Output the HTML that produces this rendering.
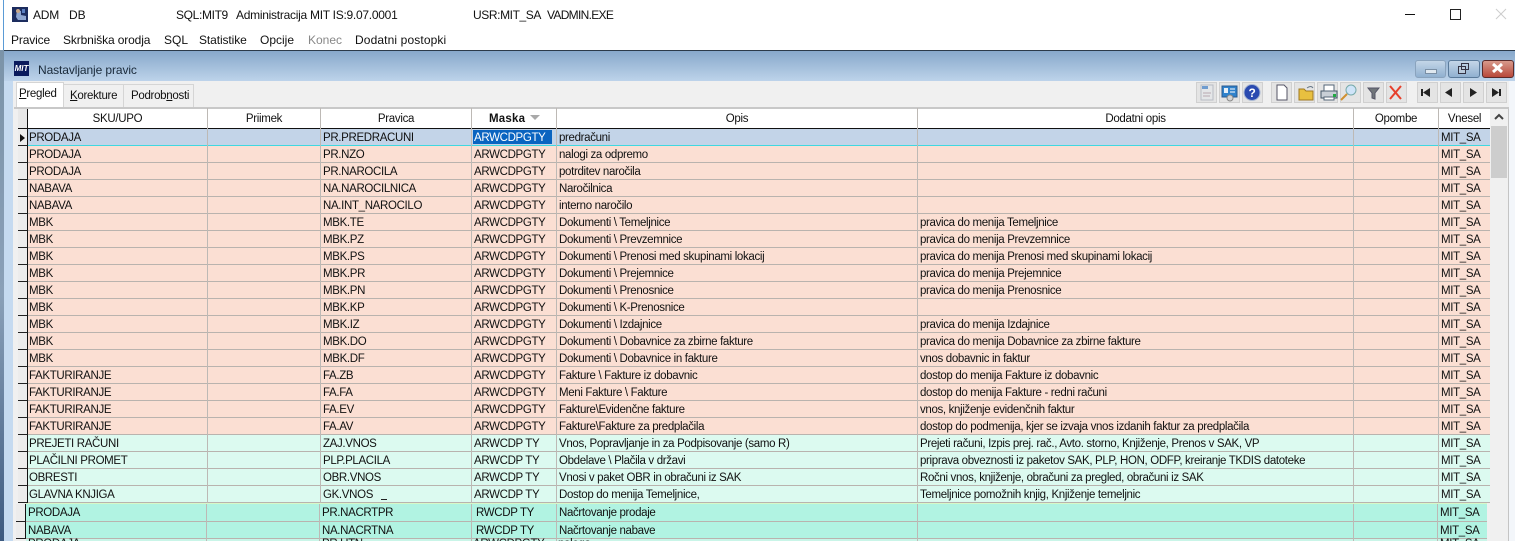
<!DOCTYPE html>
<html><head><meta charset="utf-8"><style>
html,body{margin:0;padding:0;background:#fff}
#p{position:relative;width:1515px;height:541px;overflow:hidden;background:#fff;font-family:"Liberation Sans",sans-serif;font-size:12px;color:#111}
#p div,#p span,#p svg{position:absolute;display:block}
.t{white-space:nowrap;line-height:14px}
.r{left:27px;width:1463px;height:17px;font-size:11.5px;letter-spacing:-.34px}
.r span{white-space:nowrap;top:1px;line-height:16px;height:16px}
.o{background:#fbdfd3}.g{background:#dcfaf0}.k{background:#b1f3e2}
.r:after{content:"";position:absolute;left:0;right:0;bottom:0;height:1px;background:#b9b3ae}
.a{left:2px}.b{left:296px}.c{left:447px}.d{left:532px}.e{left:893px}.f{left:1414px}
.v{top:108px;width:1px;height:395px;background:#bdb9b5}
.h{top:111px;font-size:11.5px;letter-spacing:-.3px;line-height:16px;text-align:center;white-space:nowrap}
.s{left:18px;width:9px;height:16px;background:#ececec;border-right:1px solid #111;border-bottom:1px solid #222}
.b1{top:82px;width:19px;height:19px;background:#e4e4e4;border:1px solid #d0d0d0}
</style></head><body><div id="p">
<div style="left:0;top:0;width:3px;height:50px;background:#fff"></div>
<div style="left:3px;top:0;width:1px;height:50px;background:#5a9bd6"></div>
<svg style="left:12px;top:7px" width="16" height="15"><rect width="16" height="15" fill="#1c2c5e"/><path d="M5 3l4 1v4l5 1v4H6l-2-3z" fill="#8fa6d0"/><circle cx="6" cy="4" r="2" fill="#c9a88a"/><rect x="10" y="2" width="3" height="4" fill="#5b7fc0"/></svg>
<div class="t" style="left:33px;top:8px;letter-spacing:-.2px">ADM</div><div class="t" style="left:69px;top:8px">DB</div>
<div class="t" style="left:176px;top:8px;letter-spacing:-.35px">SQL:MIT9</div><div class="t" style="left:236px;top:8px;letter-spacing:-.27px">Administracija MIT IS:9.07.0001</div>
<div class="t" style="left:473px;top:8px;letter-spacing:-.4px">USR:MIT_SA</div><div class="t" style="left:547px;top:8px;letter-spacing:-.7px">VADMIN.EXE</div>
<div style="left:1405px;top:14px;width:10px;height:1px;background:#111"></div>
<div style="left:1450px;top:9px;width:9px;height:9px;border:1px solid #222"></div>
<svg style="left:1495px;top:8px" width="12" height="12"><path d="M1 1L11 11M11 1L1 11" stroke="#ccc"/></svg>
<div class="t" style="left:11px;top:33px;letter-spacing:-.15px">Pravice</div><div class="t" style="left:63px;top:33px;letter-spacing:-.13px">Skrbniška orodja</div><div class="t" style="left:164px;top:33px">SQL</div><div class="t" style="left:199px;top:33px;letter-spacing:-.1px">Statistike</div><div class="t" style="left:260px;top:33px">Opcije</div><div class="t" style="left:308px;top:33px;color:#888">Konec</div><div class="t" style="left:355px;top:33px;letter-spacing:.12px">Dodatni postopki</div>

<div style="left:0;top:50px;width:4px;height:491px;background:linear-gradient(#7b93a8,#8aa0b8 50%,#3d5a80)"></div>
<div style="left:4px;top:50px;width:1511px;height:1px;background:#2b3a4a"></div>
<div style="left:4px;top:51px;width:1511px;height:30px;background:linear-gradient(#87a8cb,#bdd3ea)"></div>
<div style="left:4px;top:81px;width:9px;height:460px;background:#c5daf0"></div>
<div style="left:13px;top:81px;width:1496px;height:460px;background:#f0f0f0"></div>
<div style="left:1509px;top:81px;width:6px;height:460px;background:#f3f6fa"></div>
<div style="left:1508px;top:108px;width:1px;height:433px;background:#c4c4c4"></div>
<div style="left:14px;top:61px;width:15px;height:15px;background:#0a1a5c;color:#fff;font:bold italic 8px/15px 'Liberation Sans',sans-serif;text-align:center">MIT</div>
<div class="t" style="left:38px;top:63px;color:#1a2a3a;letter-spacing:-.1px">Nastavljanje pravic</div>
<div style="left:1415px;top:60px;width:29px;height:16px;background:linear-gradient(#c4d6e8,#90b0d0);border:1px solid #8aa3bd;border-radius:3px"></div>
<div style="left:1425px;top:69px;width:10px;height:3px;background:#dfe8f0;border:1px solid #7a8fa5"></div>
<div style="left:1448px;top:60px;width:30px;height:16px;background:linear-gradient(#c4d6e8,#90b0d0);border:1px solid #5a7a9a;border-radius:3px"></div>
<div style="left:1458px;top:66px;width:6px;height:6px;border:1px solid #334;background:#bcd"></div><div style="left:1461px;top:63px;width:6px;height:5px;border:1px solid #334"></div>
<div style="left:1482px;top:60px;width:30px;height:16px;background:linear-gradient(#d89a8c,#b8483a);border:1px solid #5a2a2a;border-radius:3px"></div>
<svg style="left:1491px;top:63px" width="13" height="10"><path d="M2 1L11 9M11 1L2 9" stroke="#fff" stroke-width="3"/></svg>

<div style="left:16px;top:82px;width:46px;height:25px;background:#fff;border:1px solid #d5d5d5;border-bottom:0"></div>
<div style="left:63px;top:84px;width:59px;height:23px;background:#f0f0f0;border:1px solid #d5d5d5;border-bottom:0"></div>
<div style="left:123px;top:84px;width:69px;height:23px;background:#f0f0f0;border:1px solid #d5d5d5;border-bottom:0"></div>
<div class="t" style="left:19px;top:87px;font-size:11.5px;letter-spacing:-.3px"><u>P</u>regled</div><div class="t" style="left:70px;top:89px;font-size:11.5px;letter-spacing:-.3px"><u>K</u>orekture</div><div class="t" style="left:131px;top:89px;font-size:11.5px;letter-spacing:-.3px">Podrob<u>n</u>osti</div>

<div class="b1" style="left:1196px"></div><div class="b1" style="left:1219px"></div><div class="b1" style="left:1242px"></div><div class="b1" style="left:1271px"></div><div class="b1" style="left:1294px"></div><div class="b1" style="left:1317px"></div><div class="b1" style="left:1340px"></div><div class="b1" style="left:1363px"></div><div class="b1" style="left:1386px"></div><div class="b1" style="left:1417px"></div><div class="b1" style="left:1440px"></div><div class="b1" style="left:1463px"></div><div class="b1" style="left:1486px"></div>
<svg style="left:1196px;top:82px" width="312" height="22">
<rect x="5" y="3" width="12" height="15" fill="#e4e6e8" stroke="#b8bcc4"/><rect x="6" y="4" width="6" height="3" fill="#6f9ccf"/><path d="M7 11h8M7 14h7" stroke="#b8a8b0"/>
<rect x="26" y="4" width="15" height="11" fill="#2f82cc" stroke="#2a5a90"/><rect x="28" y="6" width="4" height="5" fill="#e8f0f8"/><path d="M34 7h5M34 10h5" stroke="#fff"/><circle cx="34" cy="16" r="3" fill="#d4d4d4" stroke="#888"/>
<circle cx="56" cy="10.500" r="8" fill="#2a4ab0" stroke="#a9b8d4"/><text x="52.500" y="15" font-size="12" font-weight="bold" fill="#fff" font-family="Liberation Sans">?</text>
<path d="M81 3h7l3 3v12H81z" fill="#fff" stroke="#556"/>
<path d="M103 7h5l2 2h7v9h-14z" fill="#e8c040" stroke="#a07820"/><path d="M111 6q4-3 6 0" fill="none" stroke="#678"/>
<path d="M125 9h16v7h-16z" fill="#c9cfd6" stroke="#456"/><rect x="128" y="3" width="10" height="6" fill="#fff" stroke="#567"/><rect x="128" y="15" width="10" height="3" fill="#fff" stroke="#567"/><rect x="137" y="12" width="3" height="3" fill="#2a4"/>
<circle cx="155" cy="8" r="5" fill="#cfe4f8" stroke="#7aa"/><path d="M151 12l-6 6" stroke="#d09030" stroke-width="2"/>
<path d="M172 6h11l-4 5v6l-3-1v-5z" fill="#70757a" stroke="#556"/>
<path d="M194 4L205 17M205 4L194 17" stroke="#e6402c" stroke-width="2"/>
<path d="M226 7v7" stroke="#222" stroke-width="2"/><path d="M234 6v9l-7-4.500z" fill="#222"/>
<path d="M256 6v9l-7-4.500z" fill="#222"/><path d="M274 6v9l7-4.500z" fill="#222"/>
<path d="M296 6v9l7-4.500z" fill="#222"/><path d="M304 7v7" stroke="#222" stroke-width="2"/>
</svg>

<div style="left:14px;top:107px;width:1495px;height:2px;background:#c8c8c8"></div>
<div style="left:18px;top:109px;width:1472px;height:19px;background:#fff;border-bottom:1px solid #111"></div>
<div style="left:18px;top:109px;width:9px;height:19px;background:#e8e8e8;border-right:1px solid #111"></div>
<div style="left:14px;top:109px;width:4px;height:432px;background:#f0f0f0"></div>
<div style="left:1491px;top:126px;width:16px;height:52px;background:#cdcdcd"></div>
<svg style="left:1494px;top:113px" width="10" height="8"><path d="M1 6L5 2L9 6" fill="none" stroke="#444" stroke-width="2"/></svg>

<div class="r o" style="top:129px;background:#c3d4e8"><span class="a">PRODAJA</span><span class="b">PR.PREDRACUNI</span><span class="d">predračuni</span><span class="f">MIT_SA</span></div>
<div style="left:27px;top:145px;width:1463px;height:1px;background:#3fd8e0"></div>
<div style="left:473px;top:130px;width:79px;height:14px;background:#0a64c0;color:#fff;font-size:11.5px;letter-spacing:-.34px;line-height:15px;padding-left:1px;padding-top:1px;box-sizing:border-box">ARWCDPGTY</div>

<div class="r o" style="top:146px"><span class="a">PRODAJA</span><span class="b">PR.NZO</span><span class="c">ARWCDPGTY</span><span class="d">nalogi za odpremo</span><span class="f">MIT_SA</span></div>
<div class="r o" style="top:163px"><span class="a">PRODAJA</span><span class="b">PR.NAROCILA</span><span class="c">ARWCDPGTY</span><span class="d">potrditev naročila</span><span class="f">MIT_SA</span></div>
<div class="r o" style="top:180px"><span class="a">NABAVA</span><span class="b">NA.NAROCILNICA</span><span class="c">ARWCDPGTY</span><span class="d">Naročilnica</span><span class="f">MIT_SA</span></div>
<div class="r o" style="top:197px"><span class="a">NABAVA</span><span class="b">NA.INT_NAROCILO</span><span class="c">ARWCDPGTY</span><span class="d">interno naročilo</span><span class="f">MIT_SA</span></div>
<div class="r o" style="top:214px"><span class="a">MBK</span><span class="b">MBK.TE</span><span class="c">ARWCDPGTY</span><span class="d">Dokumenti \ Temeljnice</span><span class="e">pravica do menija Temeljnice</span><span class="f">MIT_SA</span></div>
<div class="r o" style="top:231px"><span class="a">MBK</span><span class="b">MBK.PZ</span><span class="c">ARWCDPGTY</span><span class="d">Dokumenti \ Prevzemnice</span><span class="e">pravica do menija Prevzemnice</span><span class="f">MIT_SA</span></div>
<div class="r o" style="top:248px"><span class="a">MBK</span><span class="b">MBK.PS</span><span class="c">ARWCDPGTY</span><span class="d">Dokumenti \ Prenosi med skupinami lokacij</span><span class="e">pravica do menija Prenosi med skupinami lokacij</span><span class="f">MIT_SA</span></div>
<div class="r o" style="top:265px"><span class="a">MBK</span><span class="b">MBK.PR</span><span class="c">ARWCDPGTY</span><span class="d">Dokumenti \ Prejemnice</span><span class="e">pravica do menija Prejemnice</span><span class="f">MIT_SA</span></div>
<div class="r o" style="top:282px"><span class="a">MBK</span><span class="b">MBK.PN</span><span class="c">ARWCDPGTY</span><span class="d">Dokumenti \ Prenosnice</span><span class="e">pravica do menija Prenosnice</span><span class="f">MIT_SA</span></div>
<div class="r o" style="top:299px"><span class="a">MBK</span><span class="b">MBK.KP</span><span class="c">ARWCDPGTY</span><span class="d">Dokumenti \ K-Prenosnice</span><span class="f">MIT_SA</span></div>
<div class="r o" style="top:316px"><span class="a">MBK</span><span class="b">MBK.IZ</span><span class="c">ARWCDPGTY</span><span class="d">Dokumenti \ Izdajnice</span><span class="e">pravica do menija Izdajnice</span><span class="f">MIT_SA</span></div>
<div class="r o" style="top:333px"><span class="a">MBK</span><span class="b">MBK.DO</span><span class="c">ARWCDPGTY</span><span class="d">Dokumenti \ Dobavnice za zbirne fakture</span><span class="e">pravica do menija Dobavnice za zbirne fakture</span><span class="f">MIT_SA</span></div>
<div class="r o" style="top:350px"><span class="a">MBK</span><span class="b">MBK.DF</span><span class="c">ARWCDPGTY</span><span class="d">Dokumenti \ Dobavnice in fakture</span><span class="e">vnos dobavnic in faktur</span><span class="f">MIT_SA</span></div>
<div class="r o" style="top:367px"><span class="a">FAKTURIRANJE</span><span class="b">FA.ZB</span><span class="c">ARWCDPGTY</span><span class="d">Fakture \ Fakture iz dobavnic</span><span class="e">dostop do menija Fakture iz dobavnic</span><span class="f">MIT_SA</span></div>
<div class="r o" style="top:384px"><span class="a">FAKTURIRANJE</span><span class="b">FA.FA</span><span class="c">ARWCDPGTY</span><span class="d">Meni Fakture \ Fakture</span><span class="e">dostop do menija Fakture - redni računi</span><span class="f">MIT_SA</span></div>
<div class="r o" style="top:401px"><span class="a">FAKTURIRANJE</span><span class="b">FA.EV</span><span class="c">ARWCDPGTY</span><span class="d">Fakture\Evidenčne fakture</span><span class="e">vnos, knjiženje evidenčnih faktur</span><span class="f">MIT_SA</span></div>
<div class="r o" style="top:418px"><span class="a">FAKTURIRANJE</span><span class="b">FA.AV</span><span class="c">ARWCDPGTY</span><span class="d">Fakture\Fakture za predplačila</span><span class="e">dostop do podmenija, kjer se izvaja vnos izdanih faktur za predplačila</span><span class="f">MIT_SA</span></div>
<div class="r g" style="top:435px"><span class="a">PREJETI RAČUNI</span><span class="b">ZAJ.VNOS</span><span class="c">ARWCDP TY</span><span class="d">Vnos, Popravljanje in za Podpisovanje (samo R)</span><span class="e">Prejeti računi, Izpis prej. rač., Avto. storno, Knjiženje, Prenos v SAK, VP</span><span class="f">MIT_SA</span></div>
<div class="r g" style="top:452px"><span class="a">PLAČILNI PROMET</span><span class="b">PLP.PLACILA</span><span class="c">ARWCDP TY</span><span class="d">Obdelave \ Plačila v državi</span><span class="e">priprava obveznosti iz paketov SAK, PLP, HON, ODFP, kreiranje TKDIS datoteke</span><span class="f">MIT_SA</span></div>
<div class="r g" style="top:469px"><span class="a">OBRESTI</span><span class="b">OBR.VNOS</span><span class="c">ARWCDP TY</span><span class="d">Vnosi v paket OBR in obračuni iz SAK</span><span class="e">Ročni vnos, knjiženje, obračuni za pregled, obračuni iz SAK</span><span class="f">MIT_SA</span></div>
<div class="r g" style="top:486px"><span class="a">GLAVNA KNJIGA</span><span class="b">GK.VNOS</span><span class="c">ARWCDP TY</span><span class="d">Dostop do menija Temeljnice,</span><span class="e">Temeljnice pomožnih knjig, Knjiženje temeljnic</span><span class="f">MIT_SA</span></div>
<div style="left:381px;top:499px;width:6px;height:1px;background:#222"></div>

<div class="v" style="left:207px"></div><div class="v" style="left:320px"></div><div class="v" style="left:471px"></div><div class="v" style="left:556px"></div><div class="v" style="left:917px"></div><div class="v" style="left:1353px"></div><div class="v" style="left:1438px"></div>

<div class="h" style="left:28px;width:179px">SKU/UPO</div><div class="h" style="left:208px;width:112px">Priimek</div><div class="h" style="left:321px;width:150px">Pravica</div>
<div class="h" style="left:489px;font-weight:bold;letter-spacing:.2px">Maska</div>
<div style="left:530px;top:115px;width:0;height:0;border-top:5px solid #a9a9a9;border-left:5px solid transparent;border-right:5px solid transparent"></div>
<div class="h" style="left:557px;width:360px">Opis</div><div class="h" style="left:918px;width:435px">Dodatni opis</div><div class="h" style="left:1354px;width:84px">Opombe</div><div class="h" style="left:1439px;width:51px">Vnesel</div>

<div class="s" style="top:129px"></div>
<div class="s" style="top:146px"></div><div class="s" style="top:163px"></div><div class="s" style="top:180px"></div><div class="s" style="top:197px"></div><div class="s" style="top:214px"></div><div class="s" style="top:231px"></div><div class="s" style="top:248px"></div><div class="s" style="top:265px"></div><div class="s" style="top:282px"></div><div class="s" style="top:299px"></div><div class="s" style="top:316px"></div><div class="s" style="top:333px"></div><div class="s" style="top:350px"></div><div class="s" style="top:367px"></div><div class="s" style="top:384px"></div><div class="s" style="top:401px"></div><div class="s" style="top:418px"></div><div class="s" style="top:435px"></div><div class="s" style="top:452px"></div><div class="s" style="top:469px"></div><div class="s" style="top:486px"></div>
<div style="left:20px;top:134px;width:0;height:0;border-left:5px solid #111;border-top:4px solid transparent;border-bottom:4px solid transparent"></div>

<div style="left:14px;top:503px;width:1494px;height:38px;background:#f0f0f0"></div>
<div style="left:26px;top:503px;width:1461px;height:1px;background:#d8f8c8"></div>
<div class="r k" style="top:504px;left:26px;width:1461px;height:18px"><span class="a" style="top:1px">PRODAJA</span><span class="b" style="top:1px">PR.NACRTPR</span><span class="c" style="left:450px;top:1px">RWCDP TY</span><span class="d" style="left:533px;top:1px">Načrtovanje prodaje</span><span class="f" style="top:1px">MIT_SA</span></div>
<div class="r k" style="top:522px;left:26px;width:1461px"><span class="a">NABAVA</span><span class="b">NA.NACRTNA</span><span class="c" style="left:450px">RWCDP TY</span><span class="d" style="left:533px">Načrtovanje nabave</span><span class="f">MIT_SA</span></div>
<div class="r k" style="top:539px;left:26px;width:1461px;background:#c9f5e8"><span class="a" style="top:-3px">PRODAJA</span><span class="b" style="top:-3px">PR.UTN</span><span class="c" style="top:-3px">ARWCDPGTY</span><span class="d" style="top:-3px">naloga</span><span class="f" style="top:-3px">MIT_SA</span></div>
<div class="s" style="top:504px;left:16px;height:17px"></div><div class="s" style="top:522px;left:16px"></div>
<div class="v" style="left:206px;top:504px;height:37px"></div><div class="v" style="left:319px;top:504px;height:37px"></div><div class="v" style="left:471px;top:504px;height:37px"></div><div class="v" style="left:556px;top:504px;height:37px"></div><div class="v" style="left:917px;top:504px;height:37px"></div><div class="v" style="left:1353px;top:504px;height:37px"></div><div class="v" style="left:1437px;top:504px;height:37px"></div>
</div></body></html>
